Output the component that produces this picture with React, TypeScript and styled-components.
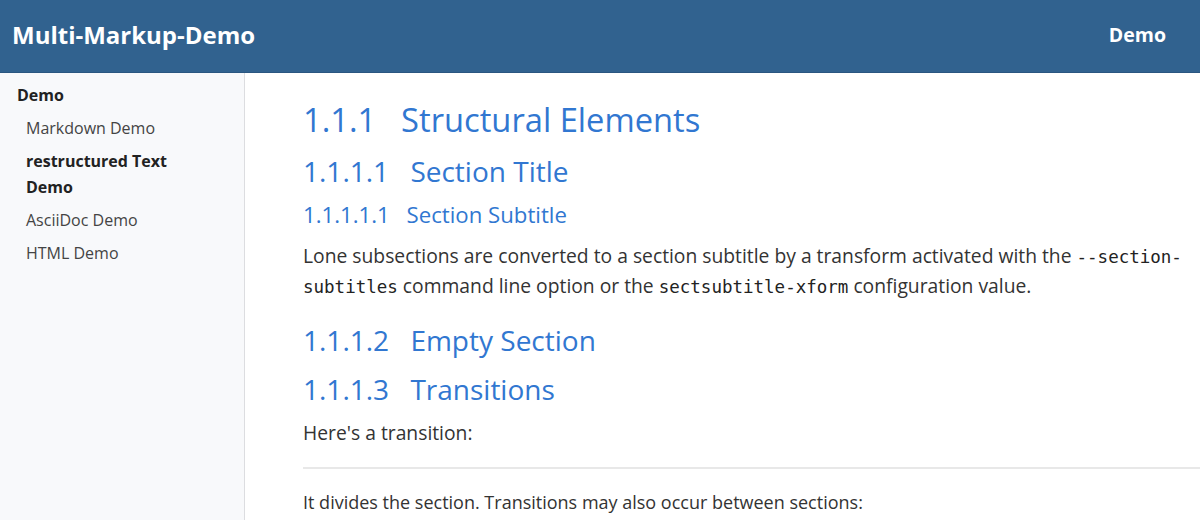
import React from "react";
import styled, { createGlobalStyle } from "styled-components";

const Global = createGlobalStyle`
  html, body { margin: 0; padding: 0; background: #fff; }
  body { font-family: "Open Sans", "Noto Sans", sans-serif; color: #333; overflow: hidden; }
  * { box-sizing: border-box; }
`;

const Page = styled.div`
  display: flex;
  flex-direction: column;
  width: 1200px;
  height: 520px;
  overflow: hidden;
`;

const Header = styled.header`
  display: flex;
  align-items: center;
  justify-content: space-between;
  height: 73px;
  flex: none;
  padding: 0 34px 3px 12px;
  background: #31628f;
  border-bottom: 1px solid #2a5680;
`;

const Brand = styled.div`
  color: #fff;
  font-weight: 700;
  font-size: 24px;
  line-height: 32px;
`;

const NavLink = styled.div`
  color: #fff;
  font-weight: 700;
  font-size: 19.5px;
  line-height: 28px;
`;

const Body = styled.div`
  display: flex;
  flex: 1;
  min-height: 0;
`;

const Sidebar = styled.nav`
  width: 245px;
  flex: none;
  background: #f8f9fb;
  border-right: 1px solid #dcdde0;
  padding: 9px 30px 0 17px;
  font-size: 16px;
  color: #333;
`;

const SideHead = styled.div`
  font-weight: 700;
  line-height: 26px;
  margin-bottom: 7px;
  color: #222;
`;

const SideItem = styled.div<{ $active?: boolean }>`
  padding-left: 9px;
  line-height: 26px;
  margin-bottom: 7px;
  font-weight: ${(p) => (p.$active ? 700 : 400)};
  color: ${(p) => (p.$active ? "#222" : "#444")};
`;

const Content = styled.main`
  flex: 1;
  padding: 23px 0 0 58px;
  min-width: 0;
`;

const Heading = styled.div<{ $size: number; $lh: number; $gap: number }>`
  font-size: ${(p) => p.$size}px;
  line-height: ${(p) => p.$lh}px;
  font-weight: 400;
  color: #3177d1;
  margin: 0 0 ${(p) => p.$gap}px;
`;

const Num = styled.span`
  display: inline-block;
  margin-right: 0.5em;
`;

const P = styled.p<{ $size?: number }>`
  margin: 0 0 19px;
  font-size: ${(p) => p.$size ?? 19.3}px;
  line-height: 30px;
  color: #333;
`;

const Code = styled.code`
  font-family: "DejaVu Sans Mono", "Liberation Mono", monospace;
  font-size: 17.5px;
  line-height: 1;
  color: #222;
`;

const Rule = styled.hr`
  border: none;
  border-top: 2px solid #e8e8e8;
  margin: 0 0 18px;
`;

export default function App() {
  return (
    <Page>
      <Global />
      <Header>
        <Brand>Multi-Markup-Demo</Brand>
        <NavLink>Demo</NavLink>
      </Header>
      <Body>
        <Sidebar>
          <SideHead>Demo</SideHead>
          <SideItem>Markdown Demo</SideItem>
          <SideItem $active>restructured Text Demo</SideItem>
          <SideItem>AsciiDoc Demo</SideItem>
          <SideItem>HTML Demo</SideItem>
        </Sidebar>
        <Content>
          <Heading as="h1" $size={32.7} $lh={48} $gap={7}>
            <Num>1.1.1</Num> Structural Elements
          </Heading>
          <Heading as="h2" $size={28} $lh={40} $gap={9}>
            <Num>1.1.1.1</Num> Section Title
          </Heading>
          <Heading as="h3" $size={22.2} $lh={30} $gap={11}>
            <Num>1.1.1.1.1</Num> Section Subtitle
          </Heading>
          <P>
            Lone subsections are converted to a section subtitle by a transform activated with the{" "}
            <Code>--section-subtitles</Code> command line option or the <Code>sectsubtitle-xform</Code>{" "}
            configuration value.
          </P>
          <Heading as="h2" $size={28} $lh={40} $gap={9}>
            <Num>1.1.1.2</Num> Empty Section
          </Heading>
          <Heading as="h2" $size={28} $lh={40} $gap={9}>
            <Num>1.1.1.3</Num> Transitions
          </Heading>
          <P>Here's a transition:</P>
          <Rule />
          <P $size={18}>It divides the section. Transitions may also occur between sections:</P>
        </Content>
      </Body>
    </Page>
  );
}
